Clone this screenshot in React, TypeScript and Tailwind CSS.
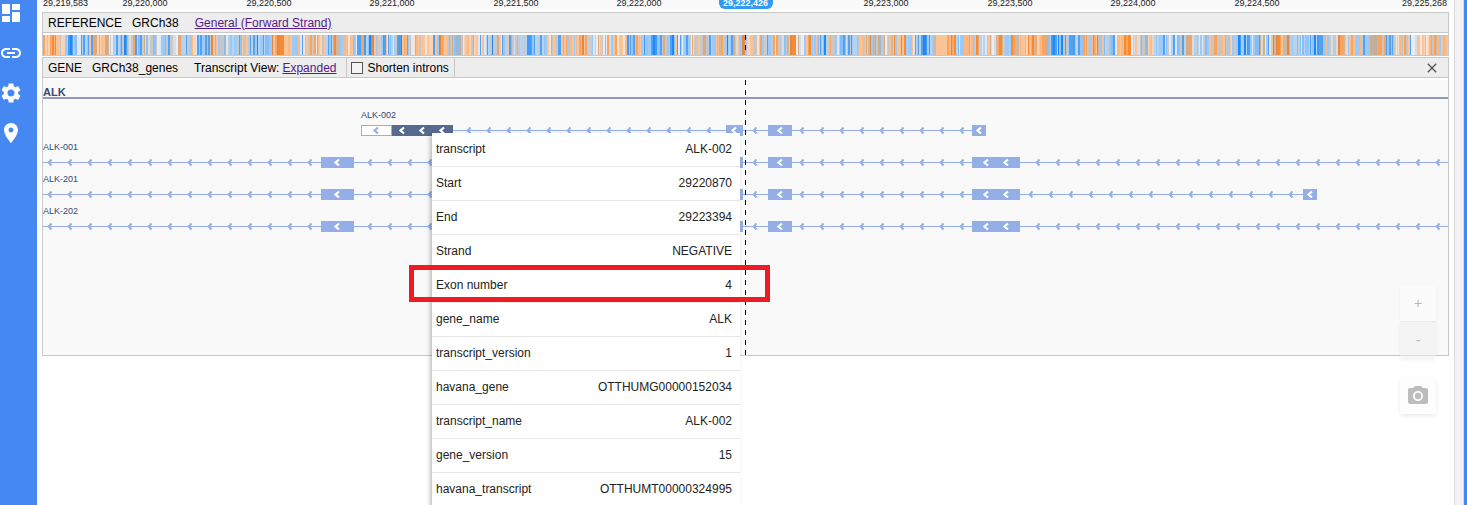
import { MdCameraAlt, MdClose, MdDashboard, MdLink, MdPlace, MdSettings } from "react-icons/md";

const TRACK_WIDTH = 1405;

const ticks = [
  { label: "29,220,000", x: 103 },
  { label: "29,220,500", x: 227 },
  { label: "29,221,000", x: 350 },
  { label: "29,221,500", x: 474 },
  { label: "29,222,000", x: 597 },
  { label: "29,223,000", x: 844 },
  { label: "29,223,500", x: 968 },
  { label: "29,224,000", x: 1091 },
  { label: "29,224,500", x: 1215 },
];

// Composition of the reference strand: B/b = GC rich, O/o = AT rich, m/g = mixed.
const composition = [
  { width: 480, runs: "oOoBbbmombBmbmmbmmBobBOgbBoBBbOOobomobOoomBOBbBOooobOmgoobBmbmB" },
  { width: 480, runs: "BBBomooObmmooBoBBmBmbmgbOBmOoobmmOmObBmbmBoOgmOObBBOoObOObmO" },
  { width: 445, runs: "bOoOomBBBBoObboOmgobmbBmbboooBBbmbOObbBBbmOoObgmBoomooOO" },
];

const palettes: Record<string, string[]> = {
  B: ["#1e88fb", "#4ea3f8", "#3f9cf9", "#92c4f5", "#5f9fdc", "#9ccbfa", "#c8c8c8", "#b4d4f3"],
  b: ["#99c9f8", "#85bef6", "#b4d4f3", "#4ea3f8", "#c8ccd0", "#dfe8f2", "#f9c195", "#9ccbfa"],
  O: ["#fb8a2e", "#f9a35c", "#d98a4c", "#fbc498", "#f9b986", "#cfb8a2", "#9ccbfa", "#fbc498"],
  o: ["#fbc498", "#f9b986", "#fbd3b3", "#f9a35c", "#f4e5da", "#c9c5c0", "#fbc498", "#9ccbfa"],
  m: ["#fbc498", "#8fc2f4", "#c8c8c8", "#f9a35c", "#c8c8c8", "#d8dde4", "#d4ab87", "#e9ecf2", "#4ea3f8"],
  g: ["#c8c8c8", "#b8b0a6", "#99b9d9", "#cfae90", "#c4c8cc"],
};

function buildStripes() {
  const stripes: { x: number; width: number; color: string }[] = [];
  let seed = 20417;
  const next = () => {
    seed = (seed * 1103515245 + 12345) % 2147483648;
    return seed / 2147483648;
  };
  let offset = 0;
  for (const part of composition) {
    let x = 0;
    while (x < part.width) {
      const run = part.runs[Math.floor((x / part.width) * part.runs.length)];
      const colors = palettes[run];
      const width = next() < 0.5 ? 1 : 2;
      stripes.push({ x: offset + x, width, color: colors[Math.floor(next() * colors.length)] });
      x += width;
    }
    offset += part.width;
  }
  return stripes;
}

const stripes = buildStripes();

type Exon = { from: number; to: number; kind?: "utr" | "selected" };
type Transcript = { name: string; y: number; labelX: number; start: number; end: number; exons: Exon[] };

const transcripts: Transcript[] = [
  {
    name: "ALK-002", y: 50, labelX: 318, start: 318, end: 943,
    exons: [
      { from: 318, to: 349, kind: "utr" },
      { from: 349, to: 410, kind: "selected" },
      { from: 683, to: 700 },
      { from: 725, to: 749 },
      { from: 929, to: 943 },
    ],
  },
  {
    name: "ALK-001", y: 82, labelX: 0, start: -4, end: 1413,
    exons: [{ from: 278, to: 311 }, { from: 683, to: 700 }, { from: 725, to: 749 }, { from: 929, to: 977 }],
  },
  {
    name: "ALK-201", y: 114, labelX: 0, start: -4, end: 1274,
    exons: [{ from: 278, to: 311 }, { from: 683, to: 700 }, { from: 725, to: 749 }, { from: 929, to: 977 }, { from: 1260, to: 1274 }],
  },
  {
    name: "ALK-202", y: 146, labelX: 0, start: -4, end: 1413,
    exons: [{ from: 278, to: 311 }, { from: 683, to: 700 }, { from: 725, to: 749 }, { from: 929, to: 977 }],
  },
];

function arrowCenters(from: number, to: number) {
  const count = Math.max(1, Math.floor((to - from) / 20));
  const margin = (to - from - 20 * (count - 1)) / 2;
  return Array.from({ length: count }, (_, i) => Math.floor(from + margin + 20 * i));
}

function Arrows({ from, to, y, color, wide }: { from: number; to: number; y: number; color: string; wide?: boolean }) {
  return (
    <>
      {arrowCenters(from, to).map((x) => (
        <path
          key={x}
          d={wide ? `M${x + 2} ${y - 2.5}l-3.5 3l3.5 3` : `M${x + 1.5} ${y - 2.5}l-2.8 3l2.8 3`}
          fill="none"
          stroke={color}
          strokeWidth={wide ? 2.2 : 2}
        />
      ))}
    </>
  );
}

function TranscriptRow({ name, y, labelX, start, end, exons }: Transcript) {
  const introns: [number, number][] = [];
  let cursor = start;
  for (const exon of exons) {
    if (exon.from > cursor) introns.push([cursor, exon.from]);
    cursor = exon.to;
  }
  if (end > cursor) introns.push([cursor, end]);
  return (
    <g>
      <text x={labelX} y={y - 12} fontSize="9" fill="#364a73">{name}</text>
      {introns.map(([from, to]) => (
        <g key={from}>
          <rect x={from} y={y} width={to - from} height="1" fill="#94aee6" />
          <Arrows from={from} to={to} y={y} color="#94aee6" />
        </g>
      ))}
      {exons.map(({ from, to, kind }) => (
        <g key={from}>
          {kind === "utr" ? (
            <rect x={from + 0.5} y={y - 4.5} width={to - from - 1} height="10" fill="#fff" stroke="#94aee6" />
          ) : (
            <rect x={from} y={y - 5} width={to - from} height="11" fill={kind === "selected" ? "#58698f" : "#94aee6"} />
          )}
          <Arrows from={from} to={to} y={y} color={kind === "utr" ? "#94aee6" : "#fff"} wide />
        </g>
      ))}
    </g>
  );
}

const details = [
  ["transcript", "ALK-002"],
  ["Start", "29220870"],
  ["End", "29223394"],
  ["Strand", "NEGATIVE"],
  ["Exon number", "4"],
  ["gene_name", "ALK"],
  ["transcript_version", "1"],
  ["havana_gene", "OTTHUMG00000152034"],
  ["transcript_name", "ALK-002"],
  ["gene_version", "15"],
  ["havana_transcript", "OTTHUMT00000324995"],
];

const navItems = [
  { label: "Dashboard", Icon: MdDashboard },
  { label: "Link", Icon: MdLink },
  { label: "Settings", Icon: MdSettings },
  { label: "Location", Icon: MdPlace },
];

function Ruler() {
  return (
    <div className="relative h-[9px] bg-[#f9f9f9] text-[9px] leading-[10px] text-[#222]">
      <span className="absolute -top-[2px] left-px">29,219,583</span>
      {ticks.map(({ label, x }) => (
        <span key={label} className="absolute -top-[2px] -translate-x-1/2" style={{ left: `${(x / 1407) * 100}%` }}>
          {label}
        </span>
      ))}
      <span className="absolute -top-[5px] left-[50%] flex h-[14px] w-[54px] -translate-x-1/2 items-center justify-center rounded-md bg-[#2f9bf3] pt-px font-bold text-white">
        29,222,426
      </span>
      <span className="absolute -top-[2px] right-[2px]">29,225,268</span>
    </div>
  );
}

function DetailsPopup() {
  return (
    <div className="absolute left-[395px] top-[133px] w-[308px] bg-white shadow-[-2px_2px_4px_rgba(0,0,0,0.25)]">
      <dl className="text-xs text-[#222]">
        {details.map(([key, value]) => (
          <div key={key} className="flex h-[34px] items-center justify-between border-b border-[#e8e8e8] pl-1 pr-2 pb-px first:h-[34px]">
            <dt>{key}</dt>
            <dd>{value}</dd>
          </div>
        ))}
      </dl>
    </div>
  );
}

export default function App() {
  return (
    <div className="flex h-screen overflow-hidden bg-white font-['Liberation_Sans',Arial,sans-serif] text-xs text-black">
      <nav className="flex w-[37px] shrink-0 flex-col gap-[14px] bg-[#4688f1] text-white">
        {navItems.map(({ label, Icon }) => (
          <button key={label} aria-label={label} className="flex h-[26px] w-[22px] items-center justify-center">
            <Icon className="size-6 shrink-0" />
          </button>
        ))}
      </nav>

      <main className="relative min-w-0 flex-1 px-[5px]">
        <Ruler />
        <section className="mt-[3px]">
          <header className="flex h-[21px] items-center border border-[#c8c8c8] bg-[#ededed] pl-[5px]">
            <span>REFERENCE</span>
            <span className="ml-[10px]">GRCh38</span>
            <a href="#strand" className="ml-4 text-[#551a8b] underline">General (Forward Strand)</a>
          </header>
          <div className="border-x border-b border-[#c8c8c8] pt-[2px]">
            <svg className="block h-5 w-full" viewBox={`0 0 ${TRACK_WIDTH} 20`} preserveAspectRatio="none" shapeRendering="crispEdges">
              {stripes.map(({ x, width, color }) => (
                <rect key={x} x={x} y="0" width={width} height="20" fill={color} />
              ))}
              <path d="M702.5 0v5M702.5 10v5" stroke="#000" />
            </svg>
          </div>
        </section>

        <section className="mt-px">
          <header className="flex h-[21px] items-center border border-[#c8c8c8] bg-[#ededed] pl-[5px]">
            <span>GENE</span>
            <span className="ml-[10px]">GRCh38_genes</span>
            <span className="ml-4">Transcript View:</span>
            <a href="#view" className="ml-[3px] text-[#551a8b] underline">Expanded</a>
            <label className="ml-[10px] flex h-full items-center gap-1 border-x border-[#c8c8c8] pl-1 pr-[5px]">
              <input type="checkbox" className="size-3 appearance-none border border-[#555] bg-[#f4f4f4]" />
              Shorten introns
            </label>
            <button aria-label="Close track" className="ml-auto mr-2 text-[#555]">
              <MdClose className="size-4" />
            </button>
          </header>
          <div className="border-x border-b border-[#c8c8c8] pt-[2px]">
            <svg className="block h-[275px] w-full bg-[#f9f9f9]">
              <text x="0" y="16" fontSize="11" fontWeight="bold" fill="#364a73">ALK</text>
              <rect x="0" y="17" width="100%" height="2" fill="#8f9bbb" />
              {transcripts.map((t) => (
                <TranscriptRow key={t.name} {...t} />
              ))}
              <path d="M702.5 0V275" stroke="#000" strokeDasharray="5 5" />
            </svg>
          </div>
        </section>

        <DetailsPopup />
        <div className="absolute left-[372px] top-[265px] h-[37px] w-[361px] border-[5px] border-[#ed1c24]" />

        <div className="absolute right-[18px] top-[285px] flex w-9 flex-col text-sm text-[#b8b8b8]">
          <button aria-label="Zoom in" className="h-9 rounded-xs bg-[#fbfbfb] shadow-[0_1px_2px_rgba(0,0,0,0.08)]">+</button>
          <button aria-label="Zoom out" className="mt-px h-9 rounded-xs bg-[#f0f0f0]/50 shadow-[0_2px_4px_rgba(0,0,0,0.06)]">-</button>
          <button aria-label="Take screenshot" className="mt-5 flex h-9 items-center justify-center rounded-xs bg-[#fdfdfd] shadow-[0_2px_4px_rgba(0,0,0,0.08)]">
            <MdCameraAlt className="size-6 text-[#bdbdbd]" />
          </button>
        </div>
      </main>

      <div className="w-[10px] shrink-0 border-x border-[#dadada] bg-[#f3f3f3]" />
      <div className="w-[3px] shrink-0 bg-[#4688f1]" />
    </div>
  );
}
